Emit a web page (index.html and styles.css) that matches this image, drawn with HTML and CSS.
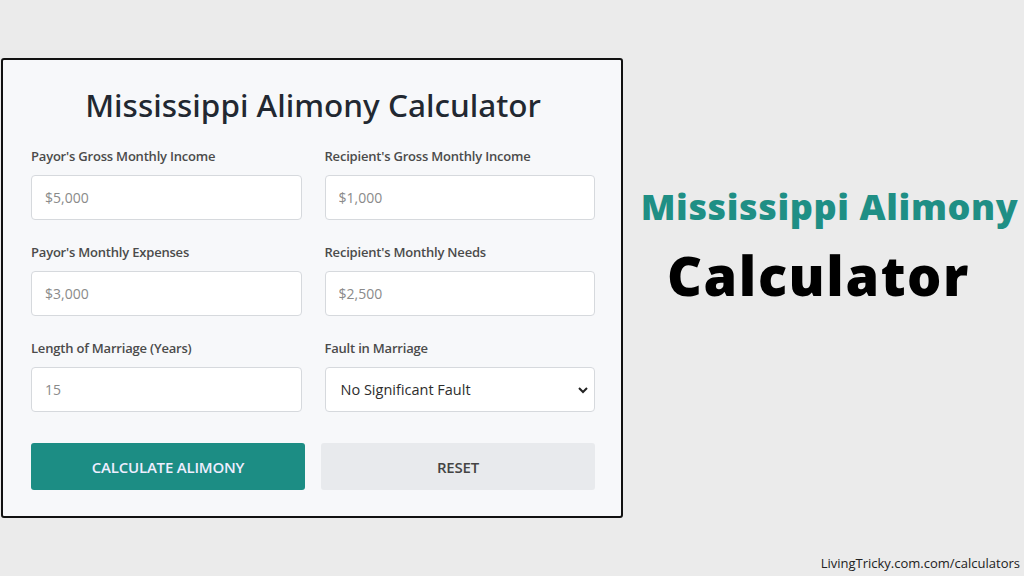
FILE: index.html
```html
<!DOCTYPE html>
<html lang="en">
<head>
    <meta charset="UTF-8">
    <meta name="viewport" content="width=device-width, initial-scale=1.0">
    <title>Mississippi Alimony Calculator</title>
    <link rel="stylesheet" href="styles.css">
</head>
<body>
    <div class="page">
        <div class="calc-card">
            <h1>Mississippi Alimony Calculator</h1>
            <div class="form-grid">
                <div class="field">
                    <label for="payor-income">Payor's Gross Monthly Income</label>
                    <input type="text" id="payor-income" placeholder="$5,000">
                </div>
                <div class="field">
                    <label for="recipient-income">Recipient's Gross Monthly Income</label>
                    <input type="text" id="recipient-income" placeholder="$1,000">
                </div>
                <div class="field">
                    <label for="payor-expenses">Payor's Monthly Expenses</label>
                    <input type="text" id="payor-expenses" placeholder="$3,000">
                </div>
                <div class="field">
                    <label for="recipient-needs">Recipient's Monthly Needs</label>
                    <input type="text" id="recipient-needs" placeholder="$2,500">
                </div>
                <div class="field">
                    <label for="marriage-length">Length of Marriage (Years)</label>
                    <input type="text" id="marriage-length" placeholder="15">
                </div>
                <div class="field">
                    <label for="fault">Fault in Marriage</label>
                    <div class="select-wrap">
                        <select id="fault">
                            <option>No Significant Fault</option>
                            <option>Payor at Fault</option>
                            <option>Recipient at Fault</option>
                        </select>
                        <svg class="chevron" width="12" height="8" viewBox="0 0 12 8"><path d="M2 2l4 4 4-4" fill="none" stroke="#222" stroke-width="2"/></svg>
                    </div>
                </div>
            </div>
            <div class="button-row">
                <button class="btn-calc">CALCULATE ALIMONY</button>
                <button class="btn-reset">RESET</button>
            </div>
        </div>
        <div class="promo">
            <div class="promo-top">Mississippi Alimony</div>
            <div class="promo-bottom">Calculator</div>
        </div>
    </div>
    <div class="footer">LivingTricky.com.com/calculators</div>
</body>
</html>
```

FILE: styles.css
```css
body {
    margin: 0;
    background: #ebebeb;
    font-family: "Open Sans", sans-serif;
    width: 1024px;
    height: 576px;
    overflow: hidden;
    position: relative;
}
.page {
    display: flex;
    padding-top: 58px;
    padding-left: 1px;
}
.calc-card {
    width: 622px;
    height: 460px;
    box-sizing: border-box;
    background: #f7f8fa;
    border: 2px solid #111;
    border-radius: 3px;
    padding: 0 26px 0 28px;
}
h1 {
    margin: 25px 0 22px;
    text-align: center;
    font-family: "Noto Sans", sans-serif;
    font-weight: 500;
    font-size: 31.5px;
    line-height: 40px;
    color: #222831;
}
.form-grid {
    display: grid;
    grid-template-columns: 1fr 1fr;
    column-gap: 23px;
    row-gap: 23px;
}
.field label {
    display: block;
    font-size: 13px;
    font-weight: 600;
    color: #4b4b4b;
    line-height: 18px;
    margin-bottom: 10px;
    letter-spacing: -0.2px;
}
.field input, .field select {
    width: 100%;
    height: 45px;
    box-sizing: border-box;
    border: 1px solid #d6d9dd;
    border-radius: 4px;
    background: #fff;
    padding: 0 13px;
    font-family: "Open Sans", sans-serif;
    font-size: 14px;
    color: #333;
    outline: none;
}
.field input::placeholder {
    color: #8a8a8a;
}
.select-wrap {
    position: relative;
}
.field select {
    appearance: none;
    padding-left: 15px;
    font-size: 14.5px;
    color: #2d2d2d;
}
.chevron {
    position: absolute;
    right: 6px;
    top: 19px;
}
.button-row {
    display: grid;
    grid-template-columns: 1fr 1fr;
    gap: 16px;
    margin-top: 31px;
}
button {
    height: 47px;
    border: none;
    border-radius: 3px;
    font-family: "Open Sans", sans-serif;
    font-size: 15px;
    font-weight: 600;
    letter-spacing: -0.2px;
}
.btn-calc {
    background: #1c8d84;
    color: #eef;
}
.btn-reset {
    background: #e8eaed;
    color: #444;
}
.promo {
    flex: 1;
    display: flex;
    flex-direction: column;
    align-items: center;
    padding-top: 126px;
    padding-left: 12px;
}
.promo-top {
    font-family: "Open Sans", sans-serif;
    font-weight: 800;
    font-size: 36px;
    color: #1f8f85;
    line-height: 46px;
    letter-spacing: 0.6px;
}
.promo-bottom {
    font-family: "Open Sans", sans-serif;
    font-weight: 800;
    font-size: 54px;
    color: #000;
    line-height: 70px;
    margin-top: 10px;
    margin-right: 22px;
    letter-spacing: 1.6px;
}
.footer {
    position: absolute;
    right: 4px;
    bottom: 4px;
    font-family: "Open Sans", sans-serif;
    font-size: 13px;
    color: #222;
}
```
